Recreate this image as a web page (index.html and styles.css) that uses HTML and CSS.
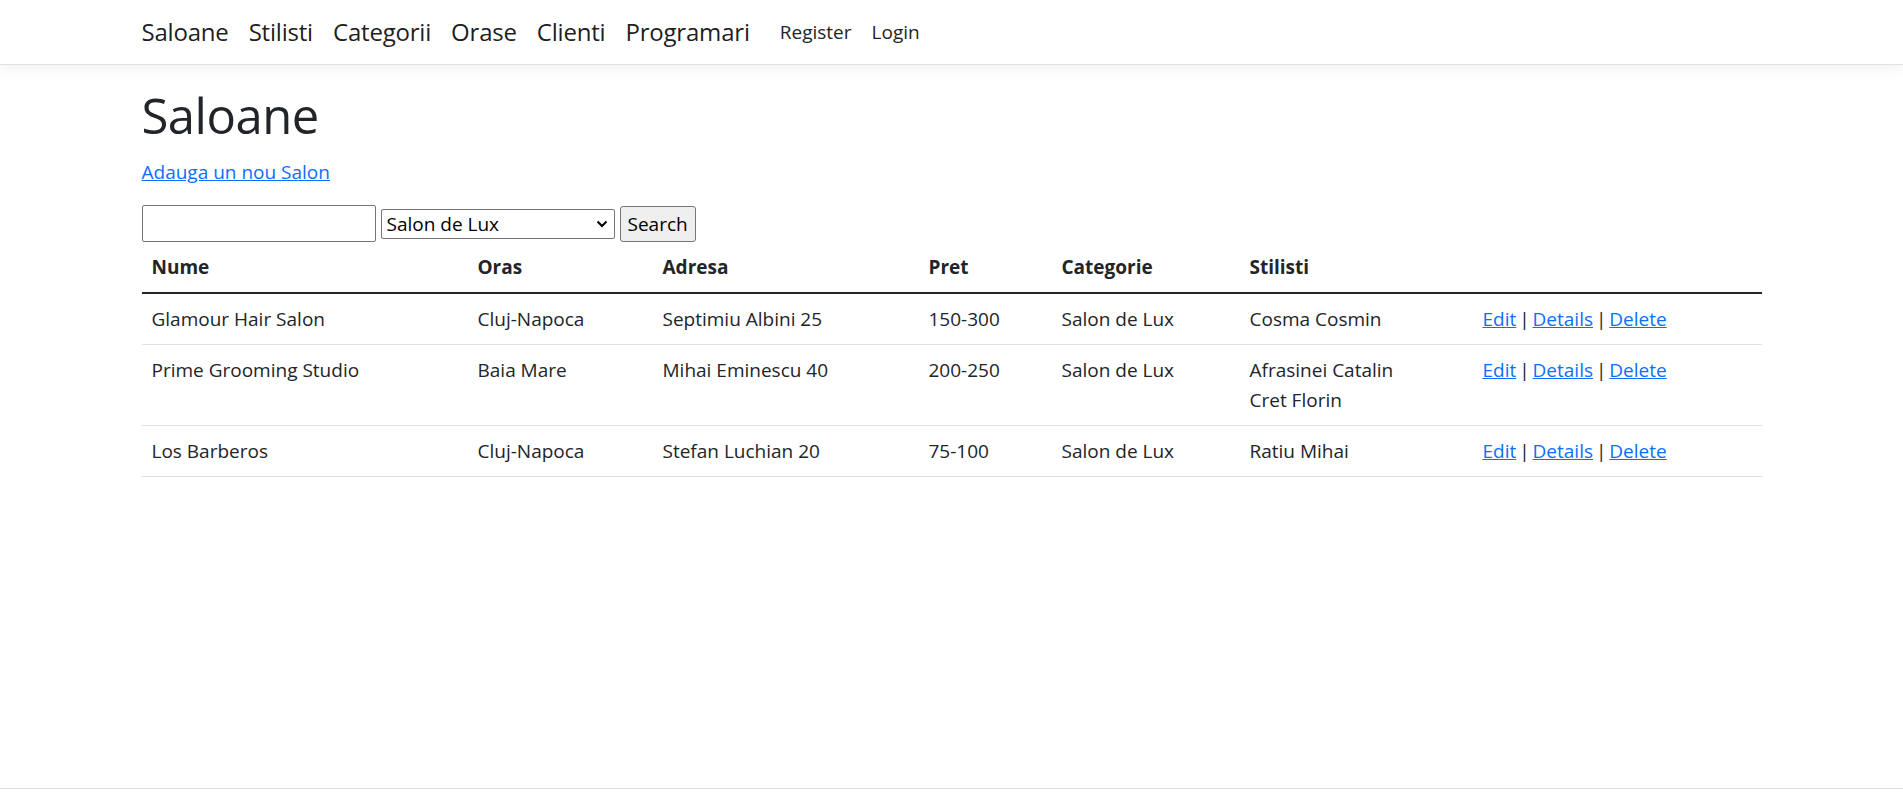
FILE: index.html
```html
<!DOCTYPE html>
<html lang="ro">
<head>
<meta charset="utf-8">
<title>Saloane</title>
<link rel="stylesheet" href="styles.css">
</head>
<body>
<div class="page">
  <header class="navbar">
    <div class="container nav-inner">
      <a class="brand" href="#">Saloane</a>
      <a class="brand" href="#">Stilisti</a>
      <a class="brand" href="#">Categorii</a>
      <a class="brand" href="#">Orase</a>
      <a class="brand" href="#">Clienti</a>
      <a class="brand" href="#">Programari</a>
      <ul class="nav-right">
        <li><a class="nav-link" href="#">Register</a></li>
        <li><a class="nav-link" href="#">Login</a></li>
      </ul>
    </div>
  </header>
  <main class="container main">
    <h1 class="title">Saloane</h1>
    <p class="create"><a href="#">Adauga un nou Salon</a></p>
    <form class="search">
      <input class="search-input" type="text">
      <select class="search-select">
        <option>Salon de Lux</option>
      </select>
      <button class="search-btn" type="button">Search</button>
    </form>
    <table class="table">
      <colgroup>
        <col class="c1"><col class="c2"><col class="c3"><col class="c4"><col class="c5"><col class="c6"><col class="c7">
      </colgroup>
      <thead>
        <tr>
          <th>Nume</th>
          <th>Oras</th>
          <th>Adresa</th>
          <th>Pret</th>
          <th>Categorie</th>
          <th>Stilisti</th>
          <th></th>
        </tr>
      </thead>
      <tbody>
        <tr>
          <td>Glamour Hair Salon</td>
          <td>Cluj-Napoca</td>
          <td>Septimiu Albini 25</td>
          <td>150-300</td>
          <td>Salon de Lux</td>
          <td><div>Cosma Cosmin</div></td>
          <td class="actions"><a href="#">Edit</a> | <a href="#">Details</a> | <a href="#">Delete</a></td>
        </tr>
        <tr>
          <td>Prime Grooming Studio</td>
          <td>Baia Mare</td>
          <td>Mihai Eminescu 40</td>
          <td>200-250</td>
          <td>Salon de Lux</td>
          <td><div>Afrasinei Catalin</div><div>Cret Florin</div></td>
          <td class="actions"><a href="#">Edit</a> | <a href="#">Details</a> | <a href="#">Delete</a></td>
        </tr>
        <tr>
          <td>Los Barberos</td>
          <td>Cluj-Napoca</td>
          <td>Stefan Luchian 20</td>
          <td>75-100</td>
          <td>Salon de Lux</td>
          <td><div>Ratiu Mihai</div></td>
          <td class="actions"><a href="#">Edit</a> | <a href="#">Details</a> | <a href="#">Delete</a></td>
        </tr>
      </tbody>
    </table>
  </main>
</div>
<footer class="footer"></footer>
</body>
</html>
```

FILE: styles.css
```css
* { box-sizing: border-box; }

html, body {
  margin: 0;
  padding: 0;
}

body {
  font-family: "Open Sans", "Noto Sans", "Liberation Sans", sans-serif;
  font-size: 20px;
  line-height: 1.5;
  color: #212529;
  background: #fff;
}

a { color: #0d6efd; }

.page {
  min-height: 788px;
}

.container {
  width: 1650px;
  margin: 0 auto;
  padding: 0 15px;
}

/* Navbar */
.navbar {
  height: 65px;
  background: #fff;
  border-bottom: 1px solid #dee2e6;
  box-shadow: 0 5px 15px rgba(0, 0, 0, 0.05);
}

.nav-inner {
  display: flex;
  align-items: center;
  height: 64px;
}

.brand {
  font-size: 24px;
  line-height: 36px;
  letter-spacing: -0.2px;
  color: rgba(0, 0, 0, 0.9);
  text-decoration: none;
  margin-right: 20px;
  white-space: nowrap;
}

.nav-right {
  display: flex;
  list-style: none;
  margin: 0;
  padding: 0;
}

.nav-link {
  display: block;
  padding: 0 10px;
  font-size: 19px;
  line-height: 30px;
  color: #212529;
  text-decoration: none;
}

/* Main */
.main {
  padding-top: 20px;
  padding-bottom: 20px;
}

.title {
  margin: 0 0 12px;
  font-size: 49px;
  font-weight: 500;
  line-height: 60px;
  letter-spacing: -0.5px;
}

.create {
  margin: 0 0 18px;
  font-size: 19px;
  line-height: 30px;
}

.search {
  display: flex;
  align-items: center;
  gap: 5px;
  margin: 0;
}

.search-input {
  width: 234px;
  height: 37px;
  padding: 1px 3px;
  border: 1px solid #767676;
  border-radius: 2px;
  font: inherit;
  background: #fff;
}

.search-select {
  -webkit-appearance: none;
  appearance: none;
  width: 234px;
  height: 30px;
  padding: 0 24px 0 5px;
  border: 1px solid #767676;
  border-radius: 2px;
  font-family: inherit;
  font-size: 19px;
  line-height: 28px;
  color: #000;
  background: #fff url("data:image/svg+xml,%3Csvg xmlns='http://www.w3.org/2000/svg' width='12' height='8' viewBox='0 0 12 8'%3E%3Cpath d='M1.5 1.5 L6 6 L10.5 1.5' fill='none' stroke='%23000' stroke-width='2'/%3E%3C/svg%3E") no-repeat right 6px center;
}

.search-btn {
  height: 36px;
  padding: 0 7px;
  border: 1px solid #767676;
  border-radius: 3px;
  background: #efefef;
  font-family: inherit;
  font-size: 19px;
  line-height: 30px;
  color: #000;
}

/* Table */
.table {
  width: 100%;
  table-layout: fixed;
  border-collapse: collapse;
  margin: 0 0 20px;
  font-size: 19px;
}

.c1 { width: 326px; }
.c2 { width: 185px; }
.c3 { width: 266px; }
.c4 { width: 133px; }
.c5 { width: 188px; }
.c6 { width: 233px; }
.c7 { width: 289px; }

.table th,
.table td {
  padding: 10px;
  line-height: 30px;
  text-align: left;
  vertical-align: top;
  border-bottom: 1px solid #dee2e6;
}

.table th {
  font-weight: 700;
  border-bottom: 2px solid #212529;
}

.actions {
  word-spacing: -2px;
}

/* Footer */
.footer {
  height: 75px;
  border-top: 1px solid #dee2e6;
}
```
